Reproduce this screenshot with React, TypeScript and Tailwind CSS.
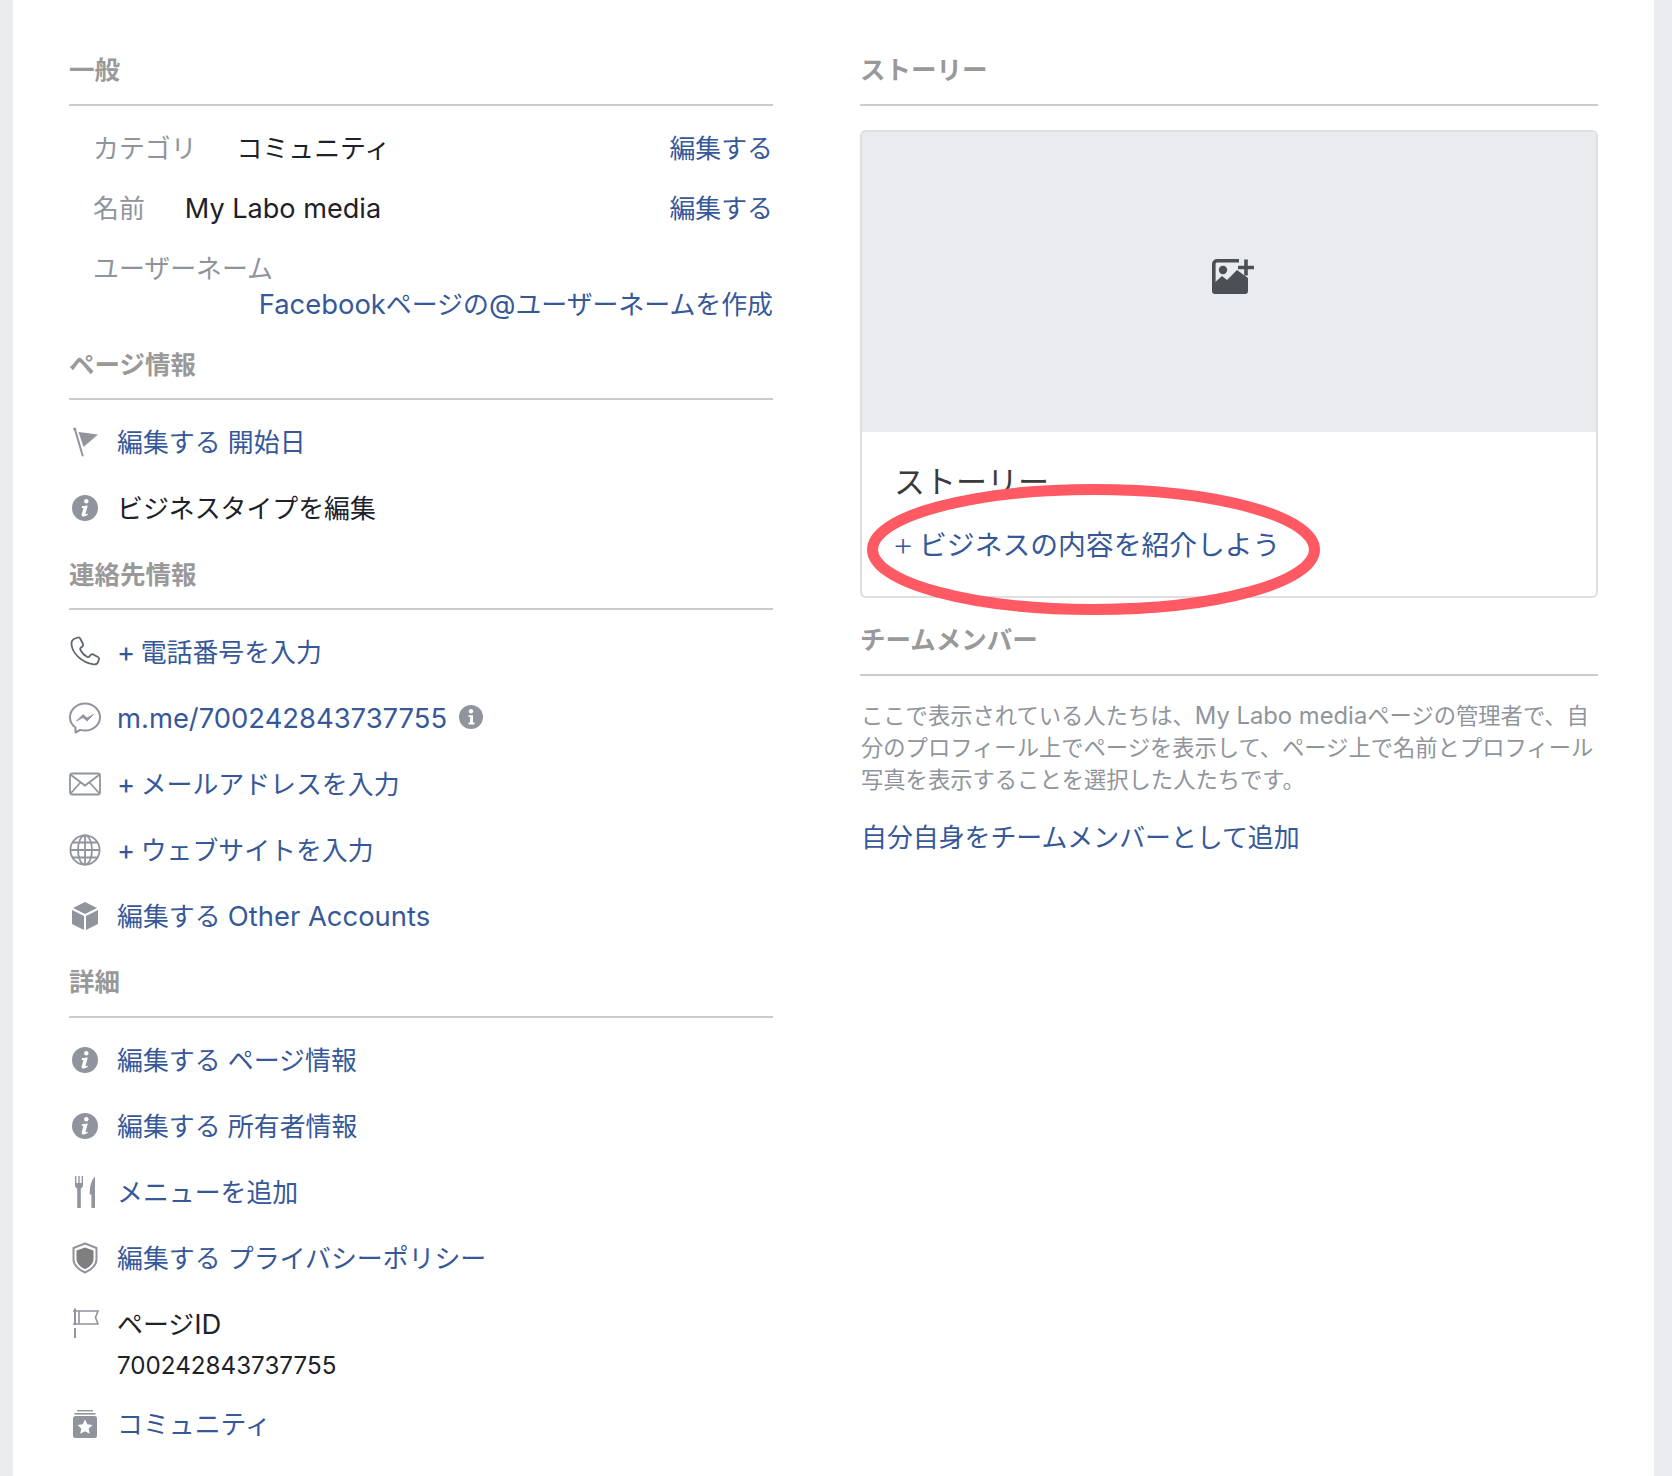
import type { ReactNode } from "react"

const GRAY = "#90949c"

function Slot({ children }: { children: ReactNode }) {
    return (
        <svg width="32" height="32" viewBox="0 0 32 32" className="mr-4 shrink-0 overflow-visible">
            {children}
        </svg>
    )
}

// Latin runs sit a bit larger than the CJK around them in the reference
function L({ children }: { children: ReactNode }) {
    return <span className="text-[27.4px] leading-none">{children}</span>
}

function Plus() {
    return <span className="mr-[5.5px] text-[27.4px] leading-none">+</span>
}

function FlagIcon() {
    return (
        <Slot>
            <path d="M6 3.5L13.6 29.5" stroke={GRAY} strokeWidth="2" strokeLinecap="round" />
            <circle cx="5.8" cy="3" r="1.6" fill={GRAY} />
            <path d="M9.5 6L29 8.5L14.5 21Z" fill={GRAY} />
        </Slot>
    )
}

function InfoIcon() {
    return (
        <Slot>
            <circle cx="16" cy="16" r="13" fill={GRAY} />
            <circle cx="17.3" cy="9.3" r="2.2" fill="#fff" />
            <path
                d="M12.8 14.3L18.8 13.4L16.6 21.6C16.4 22.4 16.9 22.6 18.6 21.4L18.9 22.6C17 24.2 15.5 24.7 14 24.5C12.8 24.3 12.4 23.3 12.8 22L14.4 16.2L12.7 15.8Z"
                fill="#fff"
            />
        </Slot>
    )
}

function PhoneIcon() {
    return (
        <Slot>
            <path
                d="M6 2.5L9 1.5C10 1.2 10.7 1.7 11.2 2.5L14 8C14.4 8.9 14.2 9.6 13.6 10.2L11.5 12C11 12.5 11 13 11.3 13.7C12.8 16.9 15.3 19.5 18.3 21C19 21.3 19.5 21.3 20 20.8L21.8 18.8C22.4 18.2 23.1 18 24 18.4L29 21C29.9 21.5 30.3 22.2 30 23.2L29.2 25.7C28.6 27.5 26.8 28.7 24.7 28.4C12 26.5 3.5 17 2.5 8.5C2.3 5.7 3.9 3.3 6 2.5Z"
                fill="none"
                stroke="#606770"
                strokeWidth="1.8"
                strokeLinejoin="round"
            />
        </Slot>
    )
}

function MessengerIcon() {
    return (
        <Slot>
            <path
                d="M16 1.5C8 1.5 1 7.6 1 15.2C1 19.4 3 23 6.5 25.5V30.5L11.3 27.9C12.8 28.3 14.3 28.6 16 28.6C24 28.6 31 22.8 31 15.2C31 7.6 24 1.5 16 1.5Z"
                fill="none"
                stroke={GRAY}
                strokeWidth="2"
                strokeLinejoin="round"
            />
            <path d="M7.5 19L14 12.5L18 16L24.5 12.5L18 19L14 15.5Z" fill={GRAY} stroke={GRAY} strokeWidth="0.8" />
        </Slot>
    )
}

function MailIcon() {
    return (
        <Slot>
            <g fill="none" stroke={GRAY} strokeWidth="1.8">
                <rect x="1" y="5.5" width="30" height="21" rx="2" />
                <path d="M2 7L16 17.5L30 7" />
                <path d="M2 25L11.5 14.5M30 25L20.5 14.5" />
            </g>
        </Slot>
    )
}

function GlobeIcon() {
    return (
        <Slot>
            <g fill="none" stroke={GRAY} strokeWidth="1.8">
                <circle cx="16" cy="16" r="14.6" />
                <ellipse cx="16" cy="16" rx="7" ry="14.6" />
                <path d="M16 1.4V30.6M1.4 16H30.6M3.6 8.5H28.4M3.6 23.5H28.4" />
            </g>
        </Slot>
    )
}

function BoxIcon() {
    return (
        <Slot>
            <g fill={GRAY}>
                <path d="M16 2L28 8L16 14L4 8Z" />
                <path d="M3 10L15 16V30L3 24Z" />
                <path d="M17 16L29 10V24L17 30Z" />
            </g>
        </Slot>
    )
}

function CutleryIcon() {
    return (
        <Slot>
            <g fill={GRAY}>
                <path d="M6 0H7.4V7H9.3V0H10.7V7H12.6V0H14V9.5C14 11 13 12 11.8 12.4V32H8.2V12.4C7 12 6 11 6 9.5Z" />
                <path d="M26 0.5C22.5 4 20.5 10 20.8 18.5H22.4V31C22.4 31.6 22.8 32 23.3 32H25C25.6 32 26 31.6 26 31Z" />
            </g>
        </Slot>
    )
}

function ShieldIcon() {
    return (
        <Slot>
            <path
                d="M16 1.5L27.5 6V17.5C27.5 23 22 28 16 30.5C10 28 4.5 23 4.5 17.5V6Z"
                fill="#fff"
                stroke={GRAY}
                strokeWidth="2"
                strokeLinejoin="round"
            />
            <path d="M16 5.5L24.5 8.6V17C24.5 21.5 20.5 25.2 16 27.2C11.5 25.2 7.5 21.5 7.5 17V8.6Z" fill="#7f7f7f" />
        </Slot>
    )
}

function PageFlagIcon() {
    return (
        <Slot>
            <g fill="none" stroke={GRAY} strokeWidth="1.6">
                <path d="M6 3.5V20M6 23V33" strokeWidth="2" />
                <path d="M4 6H29L26.5 12.5L29 19H4" />
                <path d="M10 6V19" />
            </g>
        </Slot>
    )
}

function CommunityIcon() {
    return (
        <Slot>
            <g fill={GRAY}>
                <rect x="8" y="2" width="16" height="1.4" />
                <rect x="5.5" y="5" width="21" height="1.6" />
                <rect x="4" y="8" width="24" height="22" rx="2.5" />
            </g>
            <path
                d="M16 11.5L18.3 16.3L23.5 17L19.7 20.6L20.7 25.8L16 23.3L11.3 25.8L12.3 20.6L8.5 17L13.7 16.3Z"
                fill="#fff"
            />
        </Slot>
    )
}

function SectionTitle({ className, children }: { className: string; children: ReactNode }) {
    return (
        <h2 className={`border-b-2 border-[#cccccc] text-[25.5px] leading-[36px] font-bold text-[#999999] ${className}`}>
            {children}
        </h2>
    )
}

function Row({ icon, children, link = true }: { icon: ReactNode; children: ReactNode; link?: boolean }) {
    return (
        <div className={`flex h-[66px] items-center text-[25.9px] ${link ? "text-[#365899]" : "text-[#1d2129]"}`}>
            {icon}
            <span className="flex items-center whitespace-pre pt-0.5">{children}</span>
        </div>
    )
}

function FieldRow({ label, value, gap }: { label: string; value: ReactNode; gap: string }) {
    return (
        <div className="flex h-[60px] items-center pt-0.5 pl-6 text-[25.9px]">
            <span className="text-[#90949c]">{label}</span>
            <span className={`text-[#1d2129] ${gap}`}>{value}</span>
            <a className="ml-auto text-[#365899]">編集する</a>
        </div>
    )
}

export default function App() {
    return (
        <div
            className="h-[1476px] w-[1672px] overflow-hidden bg-[#e9ebee] pr-[18px] pl-[13px] leading-[36px]"
            style={{ fontFamily: 'Inter, "Noto Sans CJK JP", sans-serif' }}
        >
            <div className="flex h-full bg-white pl-14">
                <section className="w-[704px]">
                    <SectionTitle className="pt-[52px] pb-4">一般</SectionTitle>
                    <div className="mt-3">
                        <FieldRow label="カテゴリ" value="コミュニティ" gap="ml-[40px]" />
                        <FieldRow
                            label="名前"
                            value={<span className="text-[27.1px] leading-none">My Labo media</span>}
                            gap="ml-10"
                        />
                        <div className="pt-[13px] text-[25.9px]">
                            <div className="h-9 pl-6 text-[#90949c]">ユーザーネーム</div>
                            <div className="h-[35px] text-right text-[#365899]">
                                <L>Facebook</L>ページの<L>@</L>ユーザーネームを作成
                            </div>
                        </div>
                    </div>

                    <SectionTitle className="pt-[25px] pb-[15px]">ページ情報</SectionTitle>
                    <div className="mt-[9px]">
                        <Row icon={<FlagIcon />}>編集する 開始日</Row>
                        <Row icon={<InfoIcon />} link={false}>
                            ビジネスタイプを編集
                        </Row>
                    </div>

                    <SectionTitle className="pt-4 pb-[15px]">連絡先情報</SectionTitle>
                    <div className="mt-[9px]">
                        <Row icon={<PhoneIcon />}>
                            <Plus />
                            電話番号を入力
                        </Row>
                        <Row icon={<MessengerIcon />}>
                            <L>m.me/700242843737755</L>
                            <svg width="24" height="24" viewBox="0 0 24 24" className="mb-1 ml-3">
                                <circle cx="12" cy="12" r="12" fill={GRAY} />
                                <circle cx="12" cy="6.2" r="2.2" fill="#fff" />
                                <path d="M9.5 10.2H14V17.5H15.5V19.4H9.5V17.5H11V12.1H9.5Z" fill="#fff" />
                            </svg>
                        </Row>
                        <Row icon={<MailIcon />}>
                            <Plus />
                            メールアドレスを入力
                        </Row>
                        <Row icon={<GlobeIcon />}>
                            <Plus />
                            ウェブサイトを入力
                        </Row>
                        <Row icon={<BoxIcon />}>
                            編集する <L>Other Accounts</L>
                        </Row>
                    </div>

                    <SectionTitle className="pt-[15px] pb-4">詳細</SectionTitle>
                    <div className="mt-[9px]">
                        <Row icon={<InfoIcon />}>編集する ページ情報</Row>
                        <Row icon={<InfoIcon />}>編集する 所有者情報</Row>
                        <Row icon={<CutleryIcon />}>メニューを追加</Row>
                        <Row icon={<ShieldIcon />}>編集する プライバシーポリシー</Row>
                        <div className="flex pt-[14px] text-[#1d2129]">
                            <PageFlagIcon />
                            <div className="pt-0.5">
                                <div className="h-9 text-[25.9px]">
                                    ページ<L>ID</L>
                                </div>
                                <div className="mt-[5px] h-[35px] text-[24.2px]">700242843737755</div>
                            </div>
                        </div>
                        <div className="mt-2">
                            <Row icon={<CommunityIcon />}>コミュニティ</Row>
                        </div>
                    </div>
                </section>

                <section className="ml-[87px] w-[738px]">
                    <SectionTitle className="pt-[52px] pb-4">ストーリー</SectionTitle>

                    <div className="relative mt-6 h-[468px] rounded-md border-2 border-[#dddfe2]">
                        <div className="flex h-[300px] items-center justify-center rounded-t bg-[#e9ebee] pb-[11px] pl-[7px]">
                            <svg width="42" height="35" viewBox="0 0 42 35" className="overflow-visible">
                                <g fill="#4b4f56">
                                    <path d="M27 1.8H5A3.2 3.2 0 0 0 1.8 5V30" fill="none" stroke="#4b4f56" strokeWidth="3.6" />
                                    <circle cx="11" cy="11" r="4.2" />
                                    <path d="M0 26L10 17L15 21L25 11L36 19V32A3 3 0 0 1 33 35H3A3 3 0 0 1 0 32Z" />
                                    <path d="M32.2 0.5H35.8V6.7H42V10.3H35.8V16.5H32.2V10.3H26V6.7H32.2Z" />
                                </g>
                            </svg>
                        </div>
                        <div
                            className="mt-[33px] pl-[32px] text-[31px] leading-[36px] text-[#3a3b3c]"
                            style={{ fontFamily: '"Liberation Serif", "Noto Sans CJK JP", serif' }}
                        >
                            ストーリー
                            <div className="mt-[27px] flex items-center text-[27.8px] text-[#365899]">
                                <span className="mr-[7px] text-[32px] leading-none">+</span>
                                ビジネスの内容を紹介しよう
                            </div>
                        </div>
                        <svg
                            width="453"
                            height="131"
                            viewBox="0 0 453 131"
                            className="absolute top-[352px] left-[5px]"
                        >
                            <ellipse cx="226.5" cy="65.5" rx="221" ry="60" fill="none" stroke="#ff5a63" strokeWidth="11" />
                        </svg>
                    </div>

                    <SectionTitle className="pt-6 pb-4">チームメンバー</SectionTitle>
                    <p className="mt-[24px] pl-px text-[22.3px] leading-8 text-[#90949c]">
                        ここで表示されている人たちは、<span className="text-[23.8px] leading-none">My Labo media</span>
                        ページの管理者で、自
                        <br />
                        分のプロフィール上でページを表示して、ページ上で名前とプロフィール
                        <br />
                        写真を表示することを選択した人たちです。
                    </p>
                    <a className="mt-6 block pl-px text-[25.9px] text-[#365899]">自分自身をチームメンバーとして追加</a>
                </section>
            </div>
        </div>
    )
}
